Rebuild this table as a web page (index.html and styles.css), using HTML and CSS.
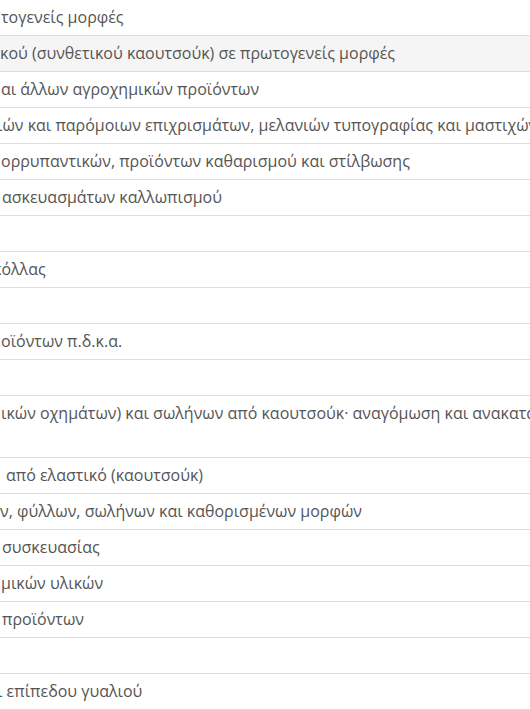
FILE: index.html
```html
<!DOCTYPE html>
<html lang="el">
<head>
<meta charset="utf-8">
<link rel="stylesheet" href="styles.css">
</head>
<body>
<div class="viewport">
<table class="list">
<tbody>
<tr><td class="s1">τογενείς μορφές</td></tr>
<tr class="hover"><td class="s0">κού (συνθετικού καουτσούκ) σε πρωτογενείς μορφές</td></tr>
<tr><td class="s1">αι άλλων αγροχημικών προϊόντων</td></tr>
<tr><td class="cut">ιών και παρόμοιων επιχρισμάτων, μελανιών τυπογραφίας και μαστιχών</td></tr>
<tr><td class="s1">ορρυπαντικών, προϊόντων καθαρισμού και στίλβωσης</td></tr>
<tr><td class="s2">ασκευασμάτων καλλωπισμού</td></tr>
<tr><td></td></tr>
<tr><td class="cutk">κόλλας</td></tr>
<tr><td></td></tr>
<tr><td class="s1">οϊόντων π.δ.κ.α.</td></tr>
<tr><td></td></tr>
<tr class="tall"><td class="s1">ικών οχημάτων) και σωλήνων από καουτσούκ· αναγόμωση και ανακατασκευή ελαστικών επισώτρων</td></tr>
<tr><td class="s3">από ελαστικό (καουτσούκ)</td></tr>
<tr><td class="s0">ν, φύλλων, σωλήνων και καθορισμένων μορφών</td></tr>
<tr><td class="s2">συσκευασίας</td></tr>
<tr><td class="s1">μικών υλικών</td></tr>
<tr><td class="s2">προϊόντων</td></tr>
<tr><td></td></tr>
<tr><td class="cut">ι επίπεδου γυαλιού</td></tr>
</tbody>
</table>
</div>
</body>
</html>
```
FILE: styles.css
```css
html, body {
  margin: 0;
  padding: 0;
  background: #fff;
}
.viewport {
  width: 530px;
  height: 710px;
  overflow: hidden;
}
.list {
  border-collapse: separate;
  border-spacing: 0;
  width: 1200px;
  font-family: "Open Sans", "Noto Sans", sans-serif;
  font-size: 16px;
  color: #555;
}
.list td {
  height: 36px;
  box-sizing: border-box;
  padding: 4px 8px 5px 0;
  line-height: 26px;
  border-bottom: 1px solid #ddd;
  white-space: nowrap;
  vertical-align: top;
}
.list tr.hover td {
  background: #f5f5f5;
}
.list tr.tall td {
  height: 62px;
}
.list td.s0 { padding-left: 0; }
.list td.s1 { padding-left: 1px; }
.list td.s2 { padding-left: 2px; }
.list td.s3 { padding-left: 6px; }
.list td.cut { text-indent: -3px; }
.list td.cutk { text-indent: -7px; }
```
